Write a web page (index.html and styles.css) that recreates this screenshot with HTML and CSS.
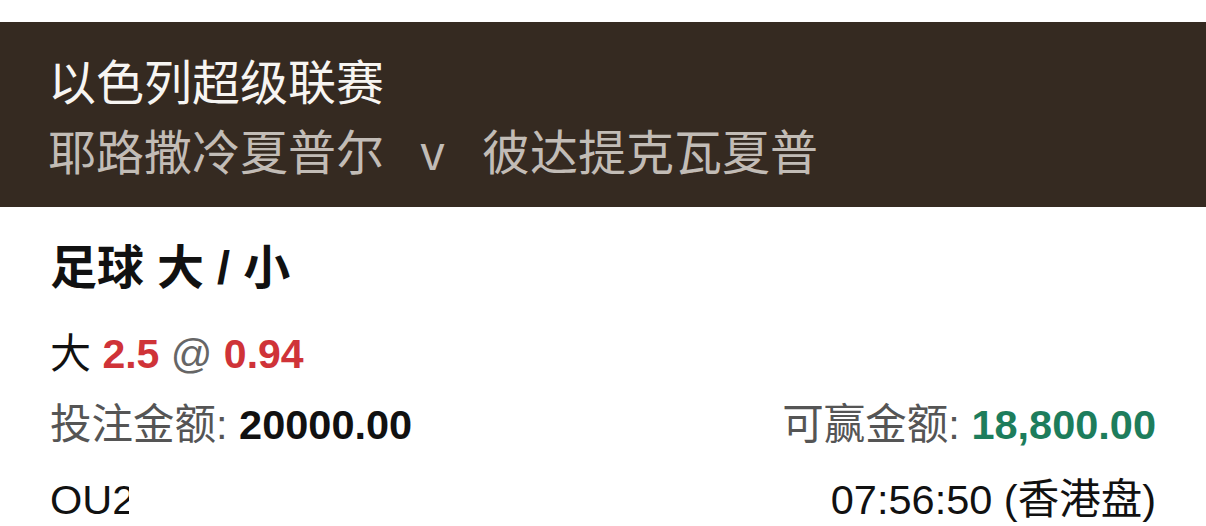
FILE: index.html
```html
<!DOCTYPE html>
<html lang="zh-CN">
<head>
<meta charset="utf-8">
<title>投注单</title>
<link rel="stylesheet" href="styles.css">
</head>
<body>
<div class="page">
  <header class="match-header">
    <div class="league">以色列超级联赛</div>
    <div class="teams"><span>耶路撒冷夏普尔</span><span class="vs">v</span><span>彼达提克瓦夏普</span></div>
  </header>
  <section class="bet">
    <div class="market">足球 大 / 小</div>
    <div class="selection">大 <span class="odds">2.5</span> <span class="at">@</span> <span class="odds">0.94</span></div>
    <div class="row amounts">
      <div><span class="label">投注金额:</span> <span class="stake">20000.00</span></div>
      <div><span class="label">可赢金额:</span> <span class="win">18,800.00</span></div>
    </div>
    <div class="row meta">
      <div class="ref">OU2515498712</div>
      <div class="time">07:56:50 (香港盘)</div>
    </div>
  </section>
</div>
</body>
</html>
```
FILE: styles.css
```css
html, body {
  margin: 0;
  padding: 0;
  background: #ffffff;
}
body {
  font-family: "Liberation Sans", "Noto Sans CJK SC", sans-serif;
  color: #111111;
  overflow: hidden;
}
.page {
  padding-top: 22px;
}
.match-header {
  background: #352a21;
  padding: 22px 48px 23px;
  font-family: "Noto Sans CJK SC", sans-serif;
  font-size: 48px;
  line-height: 70px;
}
.league {
  color: #f7f5f2;
}
.teams {
  color: #c2bcb6;
}
.vs {
  margin: 0 37px 0 36px;
}
.bet {
  padding: 0 50px;
}
.market {
  margin-top: 31px;
  font-size: 47px;
  line-height: 60px;
  font-weight: bold;
}
.selection {
  margin-top: 26px;
  font-size: 41px;
  line-height: 60px;
}
.odds {
  color: #cf3338;
  font-weight: bold;
}
.at {
  color: #666666;
}
.row {
  display: flex;
  justify-content: space-between;
  align-items: center;
  font-size: 41.5px;
  line-height: 60px;
}
.amounts {
  margin-top: 11px;
}
.meta {
  margin-top: 15px;
}
.label {
  color: #555555;
}
.stake {
  font-weight: bold;
  color: #111111;
}
.win {
  font-weight: bold;
  color: #1d7d5c;
}
.ref {
  width: 79px;
  overflow: hidden;
  white-space: nowrap;
}
.time {
  color: #111111;
}
```
